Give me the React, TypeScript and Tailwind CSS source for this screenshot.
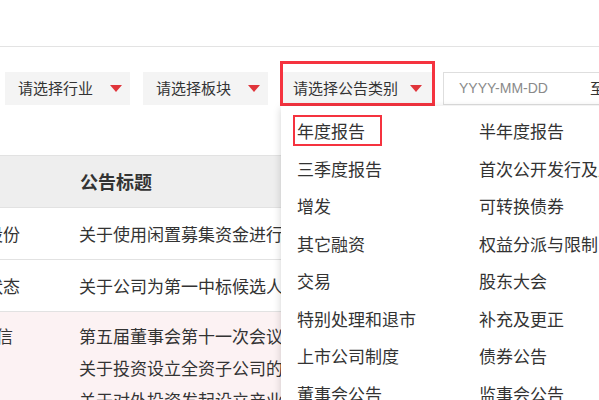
const caret = (
  <span className="inline-block w-0 h-0 border-l-[6.5px] border-r-[6.5px] border-t-[7px] border-l-transparent border-r-transparent border-t-[#e0353b]" />
);

const leftItems = ["年度报告", "三季度报告", "增发", "其它融资", "交易", "特别处理和退市", "上市公司制度", "董事会公告"];
const rightItems = ["半年度报告", "首次公开发行及上市", "可转换债券", "权益分派与限制出售", "股东大会", "补充及更正", "债券公告", "监事会公告"];

export default function App() {
  return (
    <div
      className="relative w-[599px] h-[400px] overflow-hidden bg-white text-[#333]"
      style={{ fontFamily: '"Noto Sans CJK SC", "Liberation Sans", sans-serif' }}
    >
      <div className="h-[47px] border-b border-[#e3e3e3]" />

      {/* filters */}
      <div className="flex items-center pt-[25px] pl-[5px] whitespace-nowrap">
        <div className="flex items-center justify-between shrink-0 w-[125px] h-[33px] bg-[#f4f4f4] pl-[13px] pr-[8px] text-[15px]">
          <span>请选择行业</span>
          {caret}
        </div>
        <div className="flex items-center justify-between shrink-0 w-[125px] h-[33px] bg-[#f4f4f4] pl-[13px] pr-[8px] text-[15px] ml-[13px]">
          <span>请选择板块</span>
          {caret}
        </div>
        <div className="relative flex items-center justify-between shrink-0 w-[152px] h-[33px] bg-[#f4f4f4] pl-[12px] pr-[11px] text-[15px] ml-[13px]">
          <span>请选择公告类别</span>
          {caret}
          <div className="absolute left-[-1px] top-[-11px] w-[155px] h-[45px] border-[3px] border-[#f5333f]" />
        </div>
        <div className="flex items-center shrink-0 w-[220px] h-[33px] border border-[#dedede] ml-[10px] pl-[15px]">
          <span className="text-[14px] text-[#8a8a8a] w-[131px]" style={{ fontFamily: '"Liberation Sans", sans-serif' }}>YYYY-MM-DD</span>
          <span className="text-[15px]">至</span>
        </div>
      </div>

      {/* table */}
      <div className="mt-[50px]">
        <div className="flex items-center h-[52px] bg-[#eeeeee] border-t border-[#e2e2e2]">
          <span className="pl-[80px] text-[18px] font-bold">公告标题</span>
        </div>
        <div className="flex items-center h-[52px] border-t border-[#e2e2e2] text-[17px] whitespace-nowrap">
          <div className="w-[20px] flex justify-end shrink-0">中科股份</div>
          <div className="pl-[59px]">关于使用闲置募集资金进行现金管理的公告</div>
        </div>
        <div className="flex items-center h-[52px] border-t border-[#e2e2e2] text-[17px] whitespace-nowrap">
          <div className="w-[20px] flex justify-end shrink-0">正常状态</div>
          <div className="pl-[59px]">关于公司为第一中标候选人的提示性公告</div>
        </div>
        <div className="flex items-start h-[120px] border-t border-[#e2e2e2] bg-[#fcf2f3] pt-[8px] text-[17px] leading-[32px] whitespace-nowrap">
          <div className="w-[20px] flex justify-end pr-[7px] shrink-0">诚信</div>
          <div className="pl-[59px] flex flex-col">
            <span>第五届董事会第十一次会议决议公告</span>
            <span>关于投资设立全资子公司的公告</span>
            <span>关于对外投资发起设立产业基金的公告</span>
          </div>
        </div>
      </div>

      {/* dropdown menu */}
      <div className="absolute left-[281px] top-[106px] w-[400px] h-[320px] bg-white shadow-[0_2px_8px_rgba(0,0,0,0.18)] pt-[6px] pl-[16px]">
        <div className="grid grid-cols-[182px_182px] text-[17px] whitespace-nowrap">
          {leftItems.map((l, i) => (
            <div key={l} className="contents">
              <div className="relative flex items-center h-[37.5px]">
                <span>{l}</span>
                {i === 0 && (
                  <div className="absolute left-[-4px] top-[3px] w-[89px] h-[31px] border-[2.5px] border-[#f5333f]" />
                )}
              </div>
              <div className="flex items-center h-[37.5px]">{rightItems[i]}</div>
            </div>
          ))}
        </div>
      </div>
    </div>
  );
}
